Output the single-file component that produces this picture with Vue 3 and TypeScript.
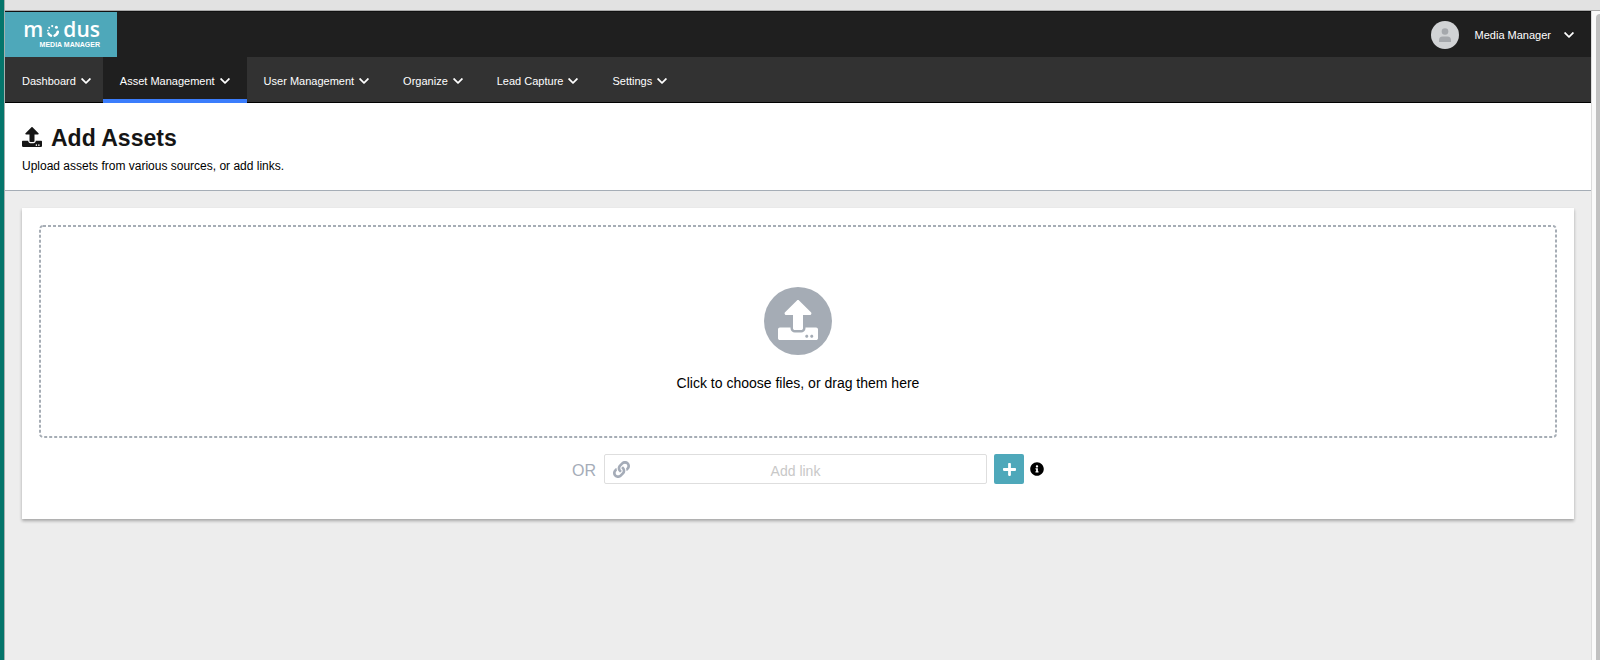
<script setup lang="ts">
import { ref } from 'vue'

interface NavItem {
  label: string
  active?: boolean
}

const navItems: NavItem[] = [
  { label: 'Dashboard' },
  { label: 'Asset Management', active: true },
  { label: 'User Management' },
  { label: 'Organize' },
  { label: 'Lead Capture' },
  { label: 'Settings' },
]

const link = ref('')

const chevronPath =
  'M207.029 381.476L12.686 187.132c-9.373-9.373-9.373-24.569 0-33.941l22.667-22.667c9.357-9.357 24.522-9.375 33.901-.04L224 284.505l154.745-154.021c9.379-9.335 24.544-9.317 33.901.04l22.667 22.667c9.373 9.373 9.373 24.569 0 33.941L240.971 381.476c-9.373 9.372-24.569 9.372-33.942 0z'
const uploadPath =
  'M296 384h-80c-13.3 0-24-10.7-24-24V192h-87.7c-17.8 0-26.7-21.5-14.1-34.1L242.3 5.7c7.5-7.5 19.8-7.5 27.3 0l152.2 152.2c12.6 12.6 3.7 34.1-14.1 34.1H320v168c0 13.3-10.7 24-24 24zm216-8v112c0 13.3-10.7 24-24 24H24c-13.3 0-24-10.7-24-24V376c0-13.3 10.7-24 24-24h136v8c0 30.9 25.1 56 56 56h80c30.9 0 56-25.1 56-56v-8h136c13.3 0 24 10.7 24 24zm-124 88c0-11-9-20-20-20s-20 9-20 20 9 20 20 20 20-9 20-20zm64 0c0-11-9-20-20-20s-20 9-20 20 9 20 20 20 20-9 20-20z'
</script>

<template>
  <div class="window">
    <div class="titlebar"></div>
    <div class="body">
      <div class="app">
        <header class="topbar">
          <a class="brand" href="#">
            <span class="wordmark">
              <span>m</span>
              <svg class="ring" viewBox="0 0 14 14" aria-hidden="true">
                <g fill="none" stroke="#fff" stroke-width="2.6" stroke-linecap="round">
                  <path d="M2.600 9.600A5 5 0 0 0 5 11.600" />
                  <path d="M8.600 11.600A5 5 0 0 0 11.800 7.800" />
                </g>
                <g fill="#fff">
                  <circle cx="1.900" cy="6.600" r="0.900" />
                  <circle cx="3.200" cy="3.700" r="1" />
                  <circle cx="6.200" cy="2.100" r="1.100" />
                  <circle cx="10.400" cy="3.300" r="1.500" />
                </g>
              </svg>
              <span>dus</span>
            </span>
            <span class="tagline">MEDIA MANAGER</span>
          </a>
          <button class="account" type="button">
            <span class="avatar">
              <svg viewBox="0 0 12 14" aria-hidden="true">
                <circle cx="6" cy="3.5" r="3.3" />
                <path d="M0 14v-1.600Q0 8.600 3.600 8.600h4.800Q12 8.600 12 12.400V14z" />
              </svg>
            </span>
            <span>Media Manager</span>
            <svg class="chevron" viewBox="0 0 448 512" aria-hidden="true"><path :d="chevronPath" /></svg>
          </button>
        </header>

        <nav class="nav">
          <button
            v-for="item in navItems"
            :key="item.label"
            type="button"
            class="nav-item"
            :class="{ active: item.active }"
          >
            <span>{{ item.label }}</span>
            <svg class="chevron" viewBox="0 0 448 512" aria-hidden="true"><path :d="chevronPath" /></svg>
          </button>
        </nav>

        <section class="heading">
          <h1>
            <svg viewBox="0 0 512 512" aria-hidden="true"><path :d="uploadPath" /></svg>
            <span>Add Assets</span>
          </h1>
          <p>Upload assets from various sources, or add links.</p>
        </section>

        <main class="panel">
          <label class="dropzone">
            <svg class="outline" aria-hidden="true"><rect x="1" y="1" rx="3" /></svg>
            <input class="file" type="file" multiple />
            <span class="badge">
              <svg viewBox="0 0 512 512" aria-hidden="true"><path :d="uploadPath" /></svg>
            </span>
            <span>Click to choose files, or drag them here</span>
          </label>

          <form class="link-row" @submit.prevent>
            <label class="or" for="link">OR</label>
            <div class="field">
              <svg viewBox="0 0 512 512" aria-hidden="true">
                <path
                  d="M326.612 185.391c59.747 59.809 58.927 155.698.36 214.590-.11.12-.24.25-.36.37l-67.200 67.200c-59.270 59.270-155.699 59.262-214.960 0-59.270-59.260-59.270-155.700 0-214.960l37.106-37.106c9.840-9.840 26.786-3.300 27.294 10.606.648 17.722 3.826 35.527 9.690 52.721 1.986 5.822.567 12.262-3.783 16.612l-13.087 13.087c-28.026 28.026-28.905 73.660-1.155 101.960 28.024 28.579 74.086 28.749 102.325.510l67.200-67.190c28.191-28.191 28.073-73.757 0-101.830-3.701-3.694-7.429-6.564-10.341-8.569a16.037 16.037 0 0 1-6.947-12.606c-.396-10.567 3.348-21.456 11.698-29.806l21.054-21.055c5.521-5.521 14.182-6.199 20.584-1.731a152.482 152.482 0 0 1 20.522 17.197zM467.547 44.449c-59.261-59.262-155.690-59.270-214.960 0l-67.200 67.200c-.12.12-.25.25-.36.37-58.566 58.892-59.387 154.781.36 214.590a152.454 152.454 0 0 0 20.521 17.196c6.402 4.468 15.064 3.789 20.584-1.731l21.054-21.055c8.350-8.350 12.094-19.239 11.698-29.806a16.037 16.037 0 0 0-6.947-12.606c-2.912-2.005-6.640-4.875-10.341-8.569-28.073-28.073-28.191-73.639 0-101.830l67.200-67.190c28.239-28.239 74.300-28.069 102.325.510 27.750 28.300 26.872 73.934-1.155 101.960l-13.087 13.087c-4.350 4.350-5.769 10.790-3.783 16.612 5.864 17.194 9.042 34.999 9.690 52.721.509 13.906 17.454 20.446 27.294 10.606l37.106-37.106c59.271-59.259 59.271-155.699.001-214.959z"
                />
              </svg>
              <input id="link" v-model="link" type="text" placeholder="Add link" />
            </div>
            <button class="add" type="submit" aria-label="Add">
              <svg viewBox="0 0 448 512" aria-hidden="true">
                <path d="M416 208H272V64c0-17.670-14.330-32-32-32h-32c-17.670 0-32 14.330-32 32v144H32c-17.670 0-32 14.330-32 32v32c0 17.670 14.330 32 32 32h144v144c0 17.670 14.330 32 32 32h32c17.670 0 32-14.330 32-32V304h144c17.670 0 32-14.330 32-32v-32c0-17.670-14.330-32-32-32z" />
              </svg>
            </button>
            <button class="info" type="button" aria-label="Information">
              <svg viewBox="0 0 512 512" aria-hidden="true">
                <path d="M256 8C119.043 8 8 119.083 8 256c0 136.997 111.043 248 248 248s248-111.003 248-248C504 119.083 392.957 8 256 8zm0 110c23.196 0 42 18.804 42 42s-18.804 42-42 42-42-18.804-42-42 18.804-42 42-42zm56 254c0 6.627-5.373 12-12 12h-88c-6.627 0-12-5.373-12-12v-24c0-6.627 5.373-12 12-12h12v-64h-12c-6.627 0-12-5.373-12-12v-24c0-6.627 5.373-12 12-12h64c6.627 0 12 5.373 12 12v100h12c6.627 0 12 5.373 12 12v24z" />
              </svg>
            </button>
          </form>
        </main>
      </div>
      <div class="scrollbar"><div class="thumb"></div></div>
    </div>
  </div>
</template>

<style>
body {
  margin: 0;
}
</style>

<style scoped>
* {
  box-sizing: border-box;
}

.window {
  display: flex;
  flex-direction: column;
  min-height: 100vh;
  border-left: 4px solid #04756b;
  background: #ededed;
  color: #000;
  font-family: 'Liberation Sans', Arial, sans-serif;
  font-size: 11px;
}

button {
  margin: 0;
  padding: 0;
  border: 0;
  background: none;
  color: inherit;
  font: inherit;
  cursor: pointer;
}

svg {
  display: block;
  flex: none;
  fill: currentColor;
}

.titlebar {
  height: 11px;
  border-bottom: 1px solid #a9a9a9;
  border-left: 1px solid #a4b0ae;
  background: #e2e2e2;
}

.body {
  display: flex;
  flex: 1;
  border-left: 1px solid #a4b0ae;
}

.app {
  flex: 1;
  min-width: 0;
}

.topbar {
  display: flex;
  justify-content: space-between;
  height: 46px;
  border-top: 1px solid #111;
  background: #1f1f1f;
  color: #fff;
}

.brand {
  display: flex;
  flex-direction: column;
  align-items: flex-end;
  width: 112px;
  padding: 7px 17px 0 0;
  background: #4ea8ba;
  color: #fff;
  text-decoration: none;
}

.wordmark {
  display: flex;
  align-items: center;
  gap: 3px;
  font-family: 'Open Sans', sans-serif;
  font-size: 21px;
  font-weight: 600;
  line-height: 20px;
}

.ring {
  width: 14px;
  height: 14px;
  margin-top: 4px;
}

.tagline {
  margin-top: 2px;
  font-size: 7px;
  font-weight: 700;
  line-height: 8px;
}

.account {
  display: flex;
  align-items: center;
  padding-right: 17px;
}

.account .chevron {
  margin-left: 13px;
}

.avatar {
  display: flex;
  align-items: center;
  justify-content: center;
  width: 28px;
  height: 28px;
  margin-right: 16px;
  border-radius: 50%;
  background: #d1d3d5;
  color: #a5a8ac;
}

.avatar svg {
  width: 12px;
  height: 14px;
}

.chevron {
  width: 10px;
  height: 12px;
}

.nav {
  display: flex;
  height: 46px;
  border-bottom: 1px solid #000;
  background: #323232;
  color: #fff;
}

.nav-item {
  display: flex;
  align-items: center;
  gap: 5px;
  height: 46px;
  padding: 2px 17px 0;
  white-space: nowrap;
}

.nav-item:first-child {
  padding-right: 12px;
}

.nav-item.active {
  padding-top: 6px;
  border-bottom: 4px solid #3b7dfc;
  background: #1f1f1f;
}

.heading {
  height: 88px;
  padding: 22px 17px 0;
  border-bottom: 1px solid #a5adb6;
  background: #fff;
}

.heading h1 {
  display: flex;
  align-items: center;
  gap: 9px;
  margin: 0;
  color: #151515;
  font-size: 23px;
  line-height: 26px;
}

.heading h1 svg {
  width: 20px;
  height: 20px;
  margin-bottom: 3px;
}

.heading p {
  margin: 7px 0 0;
  font-size: 12px;
  line-height: 16px;
}

.panel {
  margin: 17px;
  padding: 17px 17px 35px;
  background: #fff;
  box-shadow: 0 2px 3px rgba(0, 0, 0, 0.3);
}

.dropzone {
  position: relative;
  display: flex;
  flex-direction: column;
  align-items: center;
  gap: 18px;
  padding: 62px 16px 45px;
  font-size: 14px;
  line-height: 20px;
  cursor: pointer;
}

.outline {
  position: absolute;
  inset: 0;
  width: 100%;
  height: 100%;
}

.outline rect {
  width: calc(100% - 2px);
  height: calc(100% - 2px);
  fill: none;
  stroke: #a6adb5;
  stroke-width: 2px;
  stroke-dasharray: 3 2;
}

.file {
  position: absolute;
  width: 1px;
  height: 1px;
  opacity: 0;
}

.badge {
  display: flex;
  align-items: center;
  justify-content: center;
  width: 68px;
  height: 68px;
  padding-bottom: 2px;
  border-radius: 50%;
  background: #a5acb5;
  color: #fff;
}

.badge svg {
  width: 40px;
  height: 40px;
}

.link-row {
  display: flex;
  align-items: center;
  justify-content: center;
  margin-top: 16px;
  padding-left: 20px;
}

.or {
  margin-right: 8px;
  padding-top: 3px;
  color: #a5acb8;
  font-size: 16px;
}

.field {
  display: flex;
  align-items: center;
  width: 383px;
  height: 30px;
  padding: 0 8px;
  border: 1px solid #dedede;
  border-radius: 2px;
  color: #a5acb8;
}

.field svg {
  width: 17px;
  height: 17px;
}

.field input {
  flex: 1;
  min-width: 0;
  padding: 3px 17px 0 0;
  border: 0;
  outline: 0;
  background: none;
  color: #222;
  font: inherit;
  font-size: 14px;
  text-align: center;
}

.field input::placeholder {
  color: #c8c8c8;
}

.add {
  display: flex;
  align-items: center;
  justify-content: center;
  width: 30px;
  height: 30px;
  margin: 0 6px 0 7px;
  border-radius: 2px;
  background: #4ea8ba;
  color: #fff;
}

.add svg {
  width: 13px;
  height: 15px;
}

.info svg {
  width: 14px;
  height: 14px;
}

.scrollbar {
  width: 9px;
  padding: 3px 0 0 4px;
  border-left: 1px solid #dcdcdc;
  background: #fafafa;
}

.thumb {
  height: 100%;
  border-radius: 4px 0 0 0;
  background: #c1c1c1;
}
</style>
